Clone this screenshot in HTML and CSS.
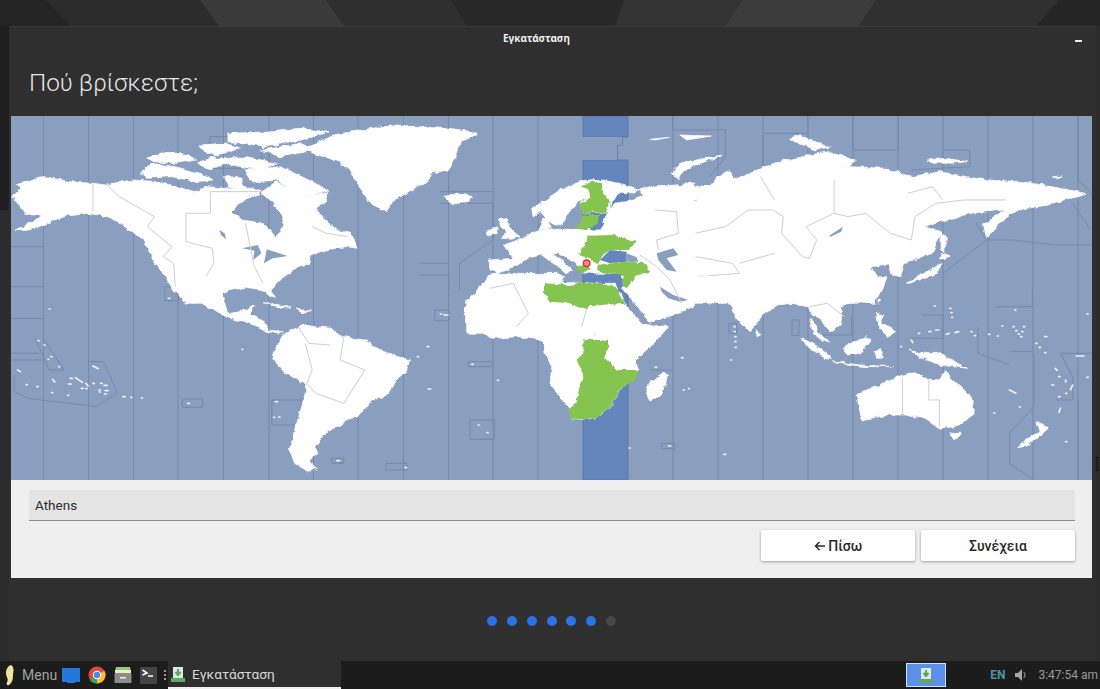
FILE: index.html
```html
<!DOCTYPE html>
<html lang="el">

<head>
  <meta charset="UTF-8" />
  <title>Εγκατάσταση</title>
  <link rel="stylesheet" href="styles.css">
</head>

<body>
  <div class="desktop">
    <!-- wallpaper facets -->
    <svg class="wallpaper" width="1100" height="661" viewBox="0 0 1100 661">
      <rect width="1100" height="661" fill="#2b2b2b" />
      <polygon points="0,0 46,0 70,26 0,26" fill="#242424" />
      <polygon points="46,0 200,0 219,26 70,26" fill="#2c2c2c" />
      <polygon points="200,0 326,0 344,26 219,26" fill="#3a3a3a" />
      <polygon points="326,0 451,0 467,26 344,26" fill="#2f2f2f" />
      <polygon points="451,0 624,0 615,26 467,26" fill="#292929" />
      <polygon points="624,0 743,0 725,26 615,26" fill="#333333" />
      <polygon points="743,0 876,0 859,26 725,26" fill="#3b3b3b" />
      <polygon points="876,0 1059,0 1036,26 859,26" fill="#303030" />
      <polygon points="1059,0 1100,0 1100,26 1036,26" fill="#252525" />
      <rect y="26" width="9" height="184" fill="#1f1f1f" />
    </svg>

    <div class="window">
      <div class="titlebar">
        <span class="titlebar-text">Εγκατάσταση</span>
        <span class="minimize"></span>
      </div>
      <h1 class="page-title">Πού βρίσκεστε;</h1>

      <svg class="map" width="1081" height="364" viewBox="11 116 1081 364">
        <defs>
          <!-- roughens the coastlines -->
          <filter id="rough" x="-5%" y="-5%" width="110%" height="110%">
            <feTurbulence type="fractalNoise" baseFrequency="0.05" numOctaves="3" seed="4" />
            <feDisplacementMap in="SourceGraphic" scale="14" xChannelSelector="R" yChannelSelector="G" />
          </filter>
        </defs>
        <rect x="11" y="116" width="1081" height="364" fill="#8a9fbf" />
        <!-- selected zone -->
        <path d="M583,116H628V137H622V145H617V160H628V480H583V160H617V145H622V137H583Z" fill="#6586bd" stroke="#5a78a8" />
        <rect x="583" y="137" width="34" height="23" fill="#8a9fbf" />
        <rect x="617" y="137" width="5" height="8" fill="#8a9fbf" />

        <!-- zone lines -->
        <path class="zones" d="M43.5,116V480M88.5,116V480M133.5,116V480M178,116V480M223.5,116V480M269,116V480M313.5,116V480M358,116V480M403.5,116V480M448.5,116V480M493,116V480M538,116V480M673,116V480M718,116V480M763,116V480M808,116V480M853,116V480M898,116V480M943,116V480M988,116V480M1033,116V480M1078,116V480" />
        <g transform="scale(.3508 .3333)">
          <path class="zones" d="M32,740H124V860H32M1255,575H1405M1255,610H1405V720L1310,790V870M1196,790H1280M1196,825H1280V870M598,410H745V505H598Z" />
        </g>
        <g transform="translate(550 0) scale(.3508 .3333)">
          <path class="zones" d="M350,347V390H500V470L455,530M607,400H735V350M607,400V500M863,350V450H993V350M1120,450H1197V500L1030,510M1505,347V540L1545,580M1490,610L1540,690M1245,720H1320L1440,735H1545M1245,720L1120,820M1215,670L1245,720" />
        </g>
        <g transform="translate(0 290) scale(.3508 .3333)">
          <path class="zones" d="M32,85H124V145L182,240H140L100,145M32,190H110M32,210H120M255,215H295L335,310L275,350L80,325L40,305V255" />
          <rect class="zones" x="520" y="327" width="58" height="25" />
          <rect class="zones" x="775" y="330" width="85" height="75" />
          <rect class="zones" x="1340" y="390" width="70" height="58" />
          <rect class="zones" x="1335" y="215" width="70" height="15" />
          <rect class="zones" x="1100" y="520" width="60" height="20" />
          <rect class="zones" x="945" y="505" width="35" height="15" />
          <rect class="zones" x="1240" y="60" width="40" height="32" />
          <rect class="zones" x="470" y="-10" width="38" height="42" />
        </g>
        <g transform="translate(550 290) scale(.3508 .3333)">
          <path class="zones" d="M1310,520L1380,570M1310,520V430L1380,350V190M1270,50H1375V0M1060,75H1120V145H1030M1220,110V190L1310,225M1310,185H1375M1455,190H1545M1455,190L1490,260V330H1440M1505,330V570M860,80V135H770M285,240H350" />
          <rect class="zones" x="318" y="460" width="38" height="16" />
          <rect class="zones" x="690" y="90" width="20" height="46" />
          <rect class="zones" x="510" y="100" width="22" height="30" />
        </g>

        <!-- north america, greenland, arctic -->
        <g class="land" filter="url(#rough)" transform="scale(.3508 .3333)">
          <path d="M35,590L60,565L45,555L90,540L130,530L200,545L265,550L305,555L345,545L380,540L450,545L520,565L555,575L590,560L640,565L700,560L745,575L720,590L680,610L662,635L690,660L750,670L770,690L785,712L800,695L810,660L800,640L770,600L745,580L790,545L830,570L880,590L935,575L925,610L900,625L920,650L960,690L1000,700L1018,745L985,740L930,750L890,765L880,790L850,800L800,840L770,870L785,895L770,890L750,870L700,862L640,875L630,910L530,910L480,850L460,810L440,790L410,720L370,690L310,650L250,640L180,650L110,680L40,695L120,650L70,640L50,610Z" />
          <path d="M870,445L950,405L1060,385L1130,375L1260,385L1360,400L1315,425L1300,470L1280,510L1225,520L1220,545L1180,565L1120,605L1100,635L1070,620L1040,590L1020,550L1005,520L960,480L900,465Z" />
          <path d="M1265,590L1300,580L1350,590L1330,605L1285,610Z" />
          <path d="M400,520L430,490L500,500L570,520L610,540L560,545L490,530L420,535Z" />
          <path d="M420,475L470,455L540,465L560,480L500,490L440,485Z" />
          <path d="M570,435L640,430L690,445L620,465L590,460Z" />
          <path d="M650,400L780,395L850,385L940,395L860,420L760,440L700,430L650,425Z" />
          <path d="M600,480L700,470L790,490L740,510L660,495Z" />
          <path d="M700,510L800,500L880,540L935,570L880,590L830,570L790,540L740,545L710,540Z" />
          <path d="M640,530L690,530L690,565L650,560Z" />
          <path d="M880,440L920,430L905,450Z" />
          <path d="M745,450L860,430L900,450L800,470Z" />
          <path d="M560,490L610,470L640,490L600,510Z" />
        </g>
        <g transform="scale(.3508 .3333)">
          <path class="water" d="M625,690L640,700L645,718L630,705Z" />
          <path class="water" d="M690,745L735,735L745,760L722,780L725,752Z" />
          <path class="water" d="M760,748L820,768L778,775L752,790L758,762Z" />
          <path class="borders" d="M265,550V635M305,555L340,590L440,650L420,680L490,740L465,770L495,790L500,860M530,640H600V575H740M530,640V725L605,745L610,790L575,850L590,890M700,670L725,800L750,850M890,680L930,700L990,710" />
        </g>

        <!-- central + south america -->
        <g class="land" filter="url(#rough)" transform="translate(0 290) scale(.3508 .3333)">
          <path d="M500,-40H640L635,20L650,72L700,60L725,45L712,72L750,92L765,120L805,125L790,132L750,120L700,95L640,78L590,50L545,15Z" />
          <path d="M860,105L940,115L980,140L1040,150L1100,190L1170,210L1160,240L1130,270L1110,310L1050,340L1020,380L985,390L975,405L925,430L900,470L905,490L880,510L905,535L880,545L840,520L825,480L840,420L860,350L875,285L815,250L775,200L810,130Z" />
          <path d="M750,38L800,45L835,55L800,52Z" />
          <path d="M845,58L885,62L860,68Z" />
          <path d="M1360,0L1325,60L1328,95L1400,145L1480,140L1540,150L1600,210V-50H1400Z" />
        </g>
        <g transform="translate(0 290) scale(.3508 .3333)">
          <path class="borders" d="M870,160L890,240L875,280L900,310L980,340L1040,240L970,210L980,140M850,110L880,160L940,165" />
          <path class="dots" d="M140,57h3M108,152h3M125,165h3M145,200h3M137,208h2M168,230h2M50,240l8,5M150,268l6,8M75,284h3M105,290h3M147,308h3M193,316h3M200,265h6M215,263l20,14M245,280l6,8M195,282h8M232,295h5M245,296h3M265,280h4M287,280h4M297,286h8M282,300h4M300,302h8M283,306h3M298,312h5M265,228l15,8M350,320h6M373,322h3M403,324h3M535,340h5M785,335h6M780,382h3M795,381h3M480,25h4M1265,75h12M1255,72h4M1218,170h4M1190,200h3M1220,297h8M1345,223h4M1418,271h3M1363,405h3M1388,428h3M1155,533h4M960,512h8M690,178h2" />
        </g>

        <!-- eurasia east + australia -->
        <g class="land" filter="url(#rough)" transform="translate(550 0) scale(.3508 .3333)">
          <path d="M300,600L400,545L420,560L470,550L480,530L510,510L530,540L590,510L650,485L790,455L870,480L855,500L810,510L860,500L960,505L1030,530L1110,515L1240,540L1350,545L1480,570L1525,580L1420,615L1330,630L1280,670L1245,715L1235,675L1295,630L1200,640L1065,680L1115,695L1090,760L1010,790L1000,830L975,825L970,795L915,800L945,860L925,910H300Z" />
          <path d="M345,525L370,490L490,465L430,490L380,510L370,535Z" />
          <path d="M680,415L715,405L760,430L800,440L760,450L710,430Z" />
          <path d="M1075,480L1130,475L1190,485L1140,490L1090,490Z" />
          <path d="M1015,850L1100,800L1115,790L1105,820L1025,850Z" />
          <path d="M1115,760L1140,770L1110,780Z" />
          <path d="M1115,700L1130,710L1125,760L1115,750Z" />
          <path d="M1430,530L1460,528L1440,534Z" />
        </g>
        <g transform="translate(550 0) scale(.3508 .3333)">
          <path class="land" d="M285,418L340,412L300,420ZM370,405L460,408L390,420Z" />
          <path class="water" d="M795,708L835,680L830,695L800,710Z" />
          <path class="borders" d="M300,630L360,640L350,680L300,640M420,600L300,630M415,700L500,680L565,630L635,630L665,650L660,700L720,770L740,775L760,720L730,680L810,640L850,650L900,640L970,700L1030,720L1040,650L1100,610L1180,600L1300,600M640,600L600,530M810,540V640M1020,580L1090,560L1120,600M415,770L520,790L540,820L420,830L440,880M540,790L640,760M575,850L660,880L750,880" />
        </g>
        <g class="land" filter="url(#rough)" transform="translate(550 290) scale(.3508 .3333)">
          <path d="M205,-40H960L935,20L900,30L835,45L830,105L800,125L765,85L745,70L735,50L690,40L650,45L610,70L570,125L530,80L500,20L440,20L410,40L375,25L350,70L285,97L245,45Z" />
          <path d="M745,85L765,125L795,160L765,145L742,110Z" />
          <path d="M-20,-20H185L215,45L262,103L338,110L300,155L245,210L250,240L205,290L175,345L130,385L65,390L50,350L0,280L5,230L-15,190Z" />
          <path d="M320,250L335,255L330,280L310,320L285,330L272,310L285,275Z" />
          <path d="M585,120L600,135L590,140Z" />
          <path d="M935,25L945,30L935,40Z" />
          <path d="M930,70L950,75L945,100L985,125L960,140L945,120L930,95Z" />
          <path d="M835,170L900,140L915,150L885,190L845,195Z" />
          <path d="M715,145L750,160L805,205L790,208L740,175Z" />
          <path d="M805,212L880,225L980,230L900,230L820,220Z" />
          <path d="M920,185L945,175L950,205L930,205Z" />
          <path d="M1025,180L1060,190L1110,190L1190,235L1110,225L1065,205Z" />
          <path d="M875,310L930,290L990,260L1040,245L1075,265L1110,270L1125,245L1160,280L1210,330L1205,375L1160,410L1110,415L1070,385L1010,375L960,375L890,390L880,350Z" />
          <path d="M1140,430L1170,430L1155,450Z" />
          <path d="M1385,395L1425,410L1400,435L1360,465L1330,470L1370,440L1395,425Z" />
        </g>
        <g transform="translate(550 290) scale(.3508 .3333)">
          <path class="borders" d="M120,60L90,100L130,135M1005,265V370M1080,270V330H1110V410M740,50L790,40L840,80" />
          <path class="dots" d="M1140,55h3M1143,68h3M1145,82h3M1095,48h3M1080,125h6M1100,120h8M1130,133l8,-3M1155,128l10,-3M1200,125h3M1210,137h3M1250,133h4M1275,138h3M1050,130h4M1030,150l4,8M1288,108h3M1320,110h3M1328,122h3M1335,132h3M1350,110h3M1345,125h3M1342,140h3M1325,60h3M1410,140h6M1385,160h3M1395,172h3M1410,188h3M1500,198h22M1440,235l6,6M1450,260h4M1430,285h6M1470,270l0,6M1490,285l-6,14M1450,320h4M1470,310h3M1530,262h4M1310,300l18,10M1338,351h3M1265,369h3M1455,355l-4,12M1470,455h3M525,110h3M525,125h3M527,140h3M527,155h3M528,172h3M375,203h4M380,300h3M395,296h2M515,210h3M300,232h4M338,468h6M226,474h2M495,493h6M1530,72h4M1000,170h2" />
        </g>

        <!-- europe, med, north africa -->
        <g class="land" filter="url(#rough)" transform="translate(470 170) scale(.3333)">
          <path d="M55,270L60,300L85,310L125,295L170,265L215,255L255,285L290,312L305,298L275,272L248,252L265,245L320,285L338,310L380,310L460,310L465,335L455,355L495,400L540,455L610,435L670,410V40L560,50L510,58L520,75L470,95L430,100L410,130L395,180L320,178L230,178L210,180L130,215L100,225L130,265Z" />
          <path d="M185,115L225,90L270,60L330,35L400,30L470,45L510,60L490,72L450,70L425,90L415,125L340,130L330,100L355,80L320,100L295,130L275,165L245,160L210,125L190,140Z" />
          <path d="M215,150L235,140L240,175L210,178Z" />
          <path d="M50,185L80,170L85,190L55,198Z" />
          <path d="M85,150L110,145L125,180L150,200L125,208L95,205L110,185L95,170Z" />
          <path d="M-10,390L50,350L75,335L120,320L180,312L225,335L340,340L440,360L470,410L515,465V490H-10Z" />
          <path d="M248,322L270,316L285,320L250,330Z" />
        </g>
        <g transform="translate(470 170) scale(.3333)">
          <path class="band" d="M390,270L420,240L470,245V275L420,280Z" />
          <path class="water" d="M470,250L500,262L505,275L470,275Z" />
          <path class="water" d="M560,250L610,235L625,255L590,265L620,305L590,300L565,270Z" />
          <path class="water" d="M570,350L610,375L655,390L630,395L595,385L575,365Z" />
          <path class="borders" d="M60,355L130,340L175,430L140,470M350,417L335,470M555,120L620,125L625,190L560,210L565,240M510,255L560,290L600,330L635,400" />
          <g filter="url(#rough)">
            <path class="green" d="M330,45L370,35L395,40L400,75L420,95L405,125L335,130L330,105L360,80L355,55Z" />
            <path class="green" d="M340,135L390,135L385,160L350,180L320,175L330,155Z" />
            <path class="green" d="M350,197L430,195L500,215L475,240L420,240L395,260L385,285L360,265L325,255L345,225Z" />
            <path class="green" d="M385,285L460,275L530,280L540,305L500,315L470,355L455,345L462,315L385,305Z" />
            <path class="green" d="M315,290L340,285L360,295L340,310L325,305Z" />
            <path class="green" d="M225,340L300,345L340,335L430,345L445,360L465,402L360,405L350,417L300,400L240,395L222,365Z" />
          </g>
          <circle cx="350" cy="280" r="10" fill="#ec8a80" stroke="#d8322c" stroke-width="4" />
        </g>
        <g filter="url(#rough)" transform="translate(550 290) scale(.3508 .3333)">
          <path class="green" d="M95,150L165,150L170,170L155,200L195,240L250,240L245,270L205,290L175,345L130,385L65,390L50,360L75,340L85,285L95,250L75,210L95,190Z" />
        </g>
      </svg>

      <div class="bottom">
        <div class="city">Athens</div>
        <div class="buttons">
          <button class="btn">
            <svg width="11" height="10" viewBox="0 0 11 10">
              <path d="M11,5H1.500M5.500,1L1.500,5L5.500,9" fill="none" stroke="#2a2a2a" stroke-width="1.500" />
            </svg>
            Πίσω
          </button>
          <button class="btn">Συνέχεια</button>
        </div>
      </div>

      <div class="dots-row">
        <span class="dot"></span>
        <span class="dot"></span>
        <span class="dot"></span>
        <span class="dot"></span>
        <span class="dot"></span>
        <span class="dot"></span>
        <span class="dot dot-off"></span>
      </div>
    </div>

    <!-- mouse pointer -->
    <svg class="pointer" width="5" height="14" viewBox="0 0 5 14">
      <path d="M0.5,0.5H4M2,0.5V13.5M0.5,13.5H4" fill="none" stroke="#111" />
    </svg>
  </div>

  <div class="panel">
    <svg class="icon-leaf" width="10" height="21" viewBox="0 0 10 21">
      <path d="M6,0C9,2 9,6 8,9C8,13 8,17 4,20C2,21 1,19 2,17C4,14 1,12 1,8C1,4 3,1 6,0Z" fill="#f1e59c" />
    </svg>
    <span class="menu-label">Menu</span>
    <svg class="launcher first" width="18" height="17" viewBox="0 0 18 17">
      <path d="M0,1H18V15H13V16H5V15H0Z" fill="#2478dc" />
    </svg>
    <svg class="launcher" width="18" height="18" viewBox="0 0 18 18">
      <circle cx="9" cy="9" r="8.5" fill="#e8453c" />
      <path d="M9,9L1.6,13.2A8.5,8.5 0 0 0 9,17.5Z" fill="#34a853" />
      <path d="M9,9L9,17.5A8.5,8.5 0 0 0 16.4,4.8Z" fill="#fbc02d" />
      <circle cx="9" cy="9" r="4.2" fill="#fff" />
      <circle cx="9" cy="9" r="3.2" fill="#4a8af0" />
    </svg>
    <svg class="launcher" width="18" height="18" viewBox="0 0 18 18">
      <path d="M2,1H16L17,5H1Z" fill="#8bc98a" />
      <path d="M1,4H17V7H1Z" fill="#f2eeb8" />
      <rect x="0.5" y="7" width="17" height="10" rx="1" fill="#8c8c8c" />
      <rect x="6" y="11" width="6" height="1.500" fill="#eee" />
    </svg>
    <svg class="launcher" width="17" height="17" viewBox="0 0 17 17">
      <rect width="17" height="17" rx="1" fill="#454545" />
      <path d="M2.500,3L7,6L2.500,8M8,9H13" fill="none" stroke="#fff" stroke-width="1.600" />
    </svg>
    <span class="grip"></span>
    <div class="task">
      <svg width="14" height="15" viewBox="0 0 14 15">
        <rect x="2" y="0" width="10" height="12" fill="#dfe8dc" />
        <path d="M7,2V7M4.500,5L7,8L9.500,5" fill="none" stroke="#5aa864" stroke-width="2" />
        <rect x="0" y="11" width="14" height="4" fill="#5fa866" />
      </svg>
      <span class="task-label">Εγκατάσταση</span>
    </div>
    <div class="tray">
      <div class="workspace">
        <svg width="14" height="15" viewBox="0 0 14 15">
          <rect x="2" y="0" width="10" height="12" fill="#dfe8dc" />
          <path d="M7,2V7M4.500,5L7,8L9.500,5" fill="none" stroke="#5aa864" stroke-width="2" />
          <rect x="0" y="11" width="14" height="4" fill="#5fa866" />
        </svg>
      </div>
      <span class="lang">EN</span>
      <svg class="volume" width="12" height="12" viewBox="0 0 12 12">
        <path d="M0,4H3L7,0V12L3,8H0Z" fill="#a8a8a8" />
        <path d="M8.500,3C10.500,4.500 10.500,7.500 8.500,9" fill="none" stroke="#777" stroke-width="1.500" />
      </svg>
      <span class="clock">3:47:54 am</span>
    </div>
  </div>
</body>

</html>
```

FILE: styles.css
```css
body {
  margin: 0;
  width: 1100px;
  height: 689px;
  overflow: hidden;
  display: flex;
  flex-direction: column;
  font-family: Roboto, 'Noto Sans', sans-serif;
  background: #2b2b2b;
}

.desktop {
  position: relative;
  flex: 1;
  padding: 26px 4px 0 9px;
}

.wallpaper {
  position: absolute;
  top: 0;
  left: 0;
}

.pointer {
  position: absolute;
  top: 457px;
  left: 1095px;
}

.window {
  position: relative;
  height: 635px;
  box-sizing: border-box;
  padding: 0 4px 0 2px;
  background: #2f2f2f;
  border-top: 1px solid #3b3b3b;
}

.titlebar {
  height: 22px;
  display: flex;
  align-items: center;
  padding: 0 10px 0 492px;
}

.titlebar-text {
  font-family: 'Noto Sans', sans-serif;
  font-size: 10px;
  font-weight: 700;
  color: #f0f0f0;
}

.minimize {
  margin-left: auto;
  width: 7px;
  height: 2px;
  margin-top: 6px;
  background: #e8e8e8;
}

.page-title {
  margin: 0;
  height: 67px;
  line-height: 67px;
  padding-left: 18px;
  font-size: 24.3px;
  font-weight: 300;
  color: #e6e6e6;
}

.map {
  display: block;
  filter: blur(0.4px);
}

.zones {
  fill: none;
  stroke: #7589aa;
  stroke-width: 1;
  vector-effect: non-scaling-stroke;
}

.land {
  fill: #fff;
  stroke: #fff;
  stroke-width: 2;
  stroke-linejoin: round;
}

.water {
  fill: #8a9fbf;
}

.band {
  fill: #6586bd;
}

.green {
  fill: #84c44f;
}

.borders {
  fill: none;
  stroke: #cfcfcf;
  stroke-width: 1;
  vector-effect: non-scaling-stroke;
}

.dots {
  fill: none;
  stroke: #eef2f8;
  stroke-width: 5;
  stroke-linecap: round;
}

.bottom {
  height: 98px;
  box-sizing: border-box;
  padding: 10px 17px 0 18px;
  background: #efefef;
}

.city {
  height: 31px;
  line-height: 30px;
  box-sizing: border-box;
  padding-left: 6px;
  font-size: 13.5px;
  color: #2e2e2e;
  background: #e4e4e4;
  border-bottom: 1px solid #8c8c8c;
  border-radius: 2px 2px 0 0;
}

.buttons {
  display: flex;
  justify-content: flex-end;
  gap: 6px;
  margin-top: 9px;
}

.btn {
  width: 154px;
  height: 31px;
  padding: 0;
  border: none;
  border-radius: 2px;
  background: #fff;
  font-family: Roboto, 'Noto Sans', sans-serif;
  font-size: 14px;
  font-weight: 500;
  color: #2a2a2a;
  box-shadow: 0 1px 3px rgba(0, 0, 0, 0.35);
}

.dots-row {
  display: flex;
  justify-content: center;
  gap: 9.800px;
  margin-top: 38px;
}

.dot {
  width: 10px;
  height: 10px;
  border-radius: 50%;
  background: #2a72e6;
}

.dot-off {
  background: #484848;
}

.panel {
  height: 28px;
  flex-shrink: 0;
  display: flex;
  align-items: center;
  background: #1c1c1c;
}

.icon-leaf {
  margin-left: 5px;
}

.menu-label {
  margin-left: 7px;
  font-size: 14px;
  color: #a2a2a2;
}

.launcher {
  margin-left: 8px;
}

.launcher.first {
  margin-left: 5px;
}

.grip {
  width: 2px;
  height: 10px;
  margin-left: 7px;
  background: repeating-linear-gradient(#999 0 2px, transparent 2px 4px);
}

.task {
  width: 173px;
  height: 28px;
  margin-left: 2px;
  box-sizing: border-box;
  padding-left: 3px;
  display: flex;
  align-items: center;
  background: #2e2e2e;
  border-bottom: 2px solid #eeeeee;
}

.task-label {
  margin-left: 7px;
  font-size: 13.7px;
  color: #d8d8d8;
}

.tray {
  margin-left: auto;
  display: flex;
  align-items: center;
  height: 28px;
}

.workspace {
  width: 40px;
  height: 24px;
  box-sizing: border-box;
  display: flex;
  align-items: center;
  justify-content: center;
  background: #5a90e8;
  border: 1px solid #cfe0fa;
}

.lang {
  margin-left: 44px;
  font-size: 12px;
  font-weight: 700;
  color: #4d93ab;
}

.volume {
  margin-left: 10px;
}

.clock {
  margin-left: 11px;
  margin-right: 2px;
  font-size: 12px;
  color: #9a9a9a;
}
```
